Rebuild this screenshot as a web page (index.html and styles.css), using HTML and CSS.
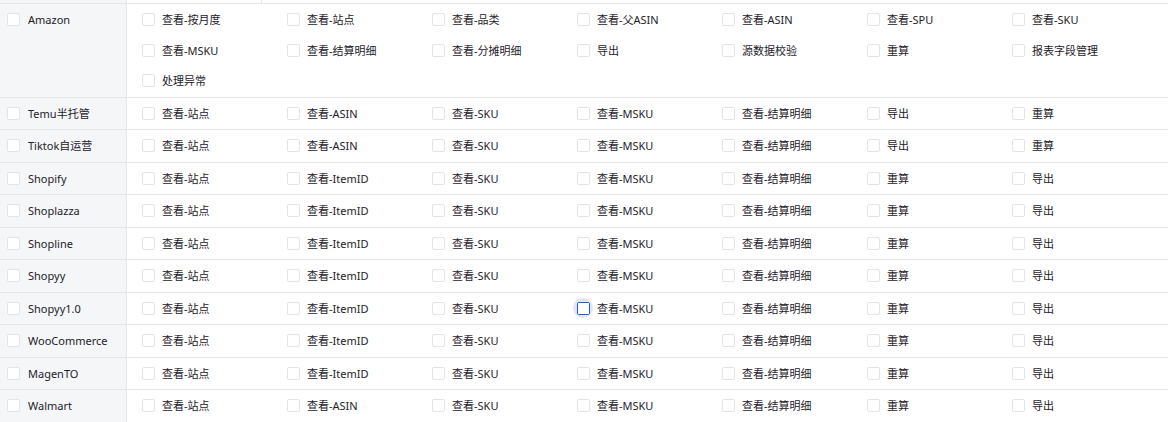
FILE: index.html
```html
<!doctype HTML>
<html>
<head>
  <meta charset="utf-8">
  <link rel="stylesheet" href="styles.css">
</head>
<body>
  <div class="perm-table">
    <div class="head-row">
      <div class="head-cell"></div>
      <div class="head-cell"></div>
      <div class="head-cell last"></div>
    </div>

    <div class="row">
      <div class="platform"><label class="check"><span class="box"></span>Amazon</label></div>
      <div class="actions">
        <label class="check"><span class="box"></span>查看-按月度</label>
        <label class="check"><span class="box"></span>查看-站点</label>
        <label class="check"><span class="box"></span>查看-品类</label>
        <label class="check"><span class="box"></span>查看-父ASIN</label>
        <label class="check"><span class="box"></span>查看-ASIN</label>
        <label class="check"><span class="box"></span>查看-SPU</label>
        <label class="check"><span class="box"></span>查看-SKU</label>
        <label class="check"><span class="box"></span>查看-MSKU</label>
        <label class="check"><span class="box"></span>查看-结算明细</label>
        <label class="check"><span class="box"></span>查看-分摊明细</label>
        <label class="check"><span class="box"></span>导出</label>
        <label class="check"><span class="box"></span>源数据校验</label>
        <label class="check"><span class="box"></span>重算</label>
        <label class="check"><span class="box"></span>报表字段管理</label>
        <label class="check"><span class="box"></span>处理异常</label>
      </div>
    </div>

    <div class="row">
      <div class="platform"><label class="check"><span class="box"></span>Temu半托管</label></div>
      <div class="actions">
        <label class="check"><span class="box"></span>查看-站点</label>
        <label class="check"><span class="box"></span>查看-ASIN</label>
        <label class="check"><span class="box"></span>查看-SKU</label>
        <label class="check"><span class="box"></span>查看-MSKU</label>
        <label class="check"><span class="box"></span>查看-结算明细</label>
        <label class="check"><span class="box"></span>导出</label>
        <label class="check"><span class="box"></span>重算</label>
      </div>
    </div>

    <div class="row">
      <div class="platform"><label class="check"><span class="box"></span>Tiktok自运营</label></div>
      <div class="actions">
        <label class="check"><span class="box"></span>查看-站点</label>
        <label class="check"><span class="box"></span>查看-ASIN</label>
        <label class="check"><span class="box"></span>查看-SKU</label>
        <label class="check"><span class="box"></span>查看-MSKU</label>
        <label class="check"><span class="box"></span>查看-结算明细</label>
        <label class="check"><span class="box"></span>导出</label>
        <label class="check"><span class="box"></span>重算</label>
      </div>
    </div>

    <div class="row">
      <div class="platform"><label class="check"><span class="box"></span>Shopify</label></div>
      <div class="actions">
        <label class="check"><span class="box"></span>查看-站点</label>
        <label class="check"><span class="box"></span>查看-ItemID</label>
        <label class="check"><span class="box"></span>查看-SKU</label>
        <label class="check"><span class="box"></span>查看-MSKU</label>
        <label class="check"><span class="box"></span>查看-结算明细</label>
        <label class="check"><span class="box"></span>重算</label>
        <label class="check"><span class="box"></span>导出</label>
      </div>
    </div>

    <div class="row">
      <div class="platform"><label class="check"><span class="box"></span>Shoplazza</label></div>
      <div class="actions">
        <label class="check"><span class="box"></span>查看-站点</label>
        <label class="check"><span class="box"></span>查看-ItemID</label>
        <label class="check"><span class="box"></span>查看-SKU</label>
        <label class="check"><span class="box"></span>查看-MSKU</label>
        <label class="check"><span class="box"></span>查看-结算明细</label>
        <label class="check"><span class="box"></span>重算</label>
        <label class="check"><span class="box"></span>导出</label>
      </div>
    </div>

    <div class="row">
      <div class="platform"><label class="check"><span class="box"></span>Shopline</label></div>
      <div class="actions">
        <label class="check"><span class="box"></span>查看-站点</label>
        <label class="check"><span class="box"></span>查看-ItemID</label>
        <label class="check"><span class="box"></span>查看-SKU</label>
        <label class="check"><span class="box"></span>查看-MSKU</label>
        <label class="check"><span class="box"></span>查看-结算明细</label>
        <label class="check"><span class="box"></span>重算</label>
        <label class="check"><span class="box"></span>导出</label>
      </div>
    </div>

    <div class="row">
      <div class="platform"><label class="check"><span class="box"></span>Shopyy</label></div>
      <div class="actions">
        <label class="check"><span class="box"></span>查看-站点</label>
        <label class="check"><span class="box"></span>查看-ItemID</label>
        <label class="check"><span class="box"></span>查看-SKU</label>
        <label class="check"><span class="box"></span>查看-MSKU</label>
        <label class="check"><span class="box"></span>查看-结算明细</label>
        <label class="check"><span class="box"></span>重算</label>
        <label class="check"><span class="box"></span>导出</label>
      </div>
    </div>

    <div class="row">
      <div class="platform"><label class="check"><span class="box"></span>Shopyy1.0</label></div>
      <div class="actions">
        <label class="check"><span class="box"></span>查看-站点</label>
        <label class="check"><span class="box"></span>查看-ItemID</label>
        <label class="check"><span class="box"></span>查看-SKU</label>
        <label class="check focused"><span class="box"></span>查看-MSKU</label>
        <label class="check"><span class="box"></span>查看-结算明细</label>
        <label class="check"><span class="box"></span>重算</label>
        <label class="check"><span class="box"></span>导出</label>
      </div>
    </div>

    <div class="row">
      <div class="platform"><label class="check"><span class="box"></span>WooCommerce</label></div>
      <div class="actions">
        <label class="check"><span class="box"></span>查看-站点</label>
        <label class="check"><span class="box"></span>查看-ItemID</label>
        <label class="check"><span class="box"></span>查看-SKU</label>
        <label class="check"><span class="box"></span>查看-MSKU</label>
        <label class="check"><span class="box"></span>查看-结算明细</label>
        <label class="check"><span class="box"></span>重算</label>
        <label class="check"><span class="box"></span>导出</label>
      </div>
    </div>

    <div class="row">
      <div class="platform"><label class="check"><span class="box"></span>MagenTO</label></div>
      <div class="actions">
        <label class="check"><span class="box"></span>查看-站点</label>
        <label class="check"><span class="box"></span>查看-ItemID</label>
        <label class="check"><span class="box"></span>查看-SKU</label>
        <label class="check"><span class="box"></span>查看-MSKU</label>
        <label class="check"><span class="box"></span>查看-结算明细</label>
        <label class="check"><span class="box"></span>重算</label>
        <label class="check"><span class="box"></span>导出</label>
      </div>
    </div>

    <div class="row">
      <div class="platform"><label class="check"><span class="box"></span>Walmart</label></div>
      <div class="actions">
        <label class="check"><span class="box"></span>查看-站点</label>
        <label class="check"><span class="box"></span>查看-ASIN</label>
        <label class="check"><span class="box"></span>查看-SKU</label>
        <label class="check"><span class="box"></span>查看-MSKU</label>
        <label class="check"><span class="box"></span>查看-结算明细</label>
        <label class="check"><span class="box"></span>重算</label>
        <label class="check"><span class="box"></span>导出</label>
      </div>
    </div>
  </div>
</body>
</html>
```

FILE: styles.css
```css
body {
  margin: 0;
  background: #fff;
  font-family: "Noto Sans", "Noto Sans CJK SC", sans-serif;
  font-size: 11px;
  color: #1d2129;
  overflow: hidden;
}
.perm-table {
  width: 1168px;
}
.head-row {
  display: grid;
  grid-template-columns: 127px 135px 1fr;
  height: 3px;
  border-bottom: 1px solid #e5e6eb;
}
.head-cell {
  border-right: 1px solid #e5e6eb;
}
.head-cell:first-child {
  background: #f5f6f8;
}
.head-cell.last {
  border-right: 0;
}
.row {
  display: grid;
  grid-template-columns: 127px 1fr;
  border-bottom: 1px solid #e5e6eb;
}
.platform {
  background: #f5f6f8;
  border-right: 1px solid #e5e6eb;
  padding: 6px 0 6px 7px;
}
.actions {
  display: grid;
  grid-template-columns: repeat(7, 145px);
  row-gap: 11px;
  padding: 6px 0 6px 15px;
}
.check {
  display: flex;
  align-items: center;
  height: 19.5px;
  line-height: 19.5px;
  white-space: nowrap;
  cursor: pointer;
}
.box {
  position: relative;
  width: 13px;
  height: 13px;
  box-sizing: border-box;
  border: 1.5px solid #e1e3e8;
  border-radius: 2px;
  background: #fff;
  margin-right: 7px;
  flex: none;
}
.platform .box {
  margin-right: 8px;
}
.focused .box {
  border: 1.5px solid #165dff;
}
.focused .box::before {
  content: "";
  position: absolute;
  left: -5px;
  top: -5px;
  width: 20px;
  height: 20px;
  border-radius: 50%;
  background: #e5e6eb;
  z-index: -1;
}
.focused .box::after {
  content: "";
  position: absolute;
  inset: 0;
  background: #fff;
}
.focused {
  position: relative;
  z-index: 0;
}
```
